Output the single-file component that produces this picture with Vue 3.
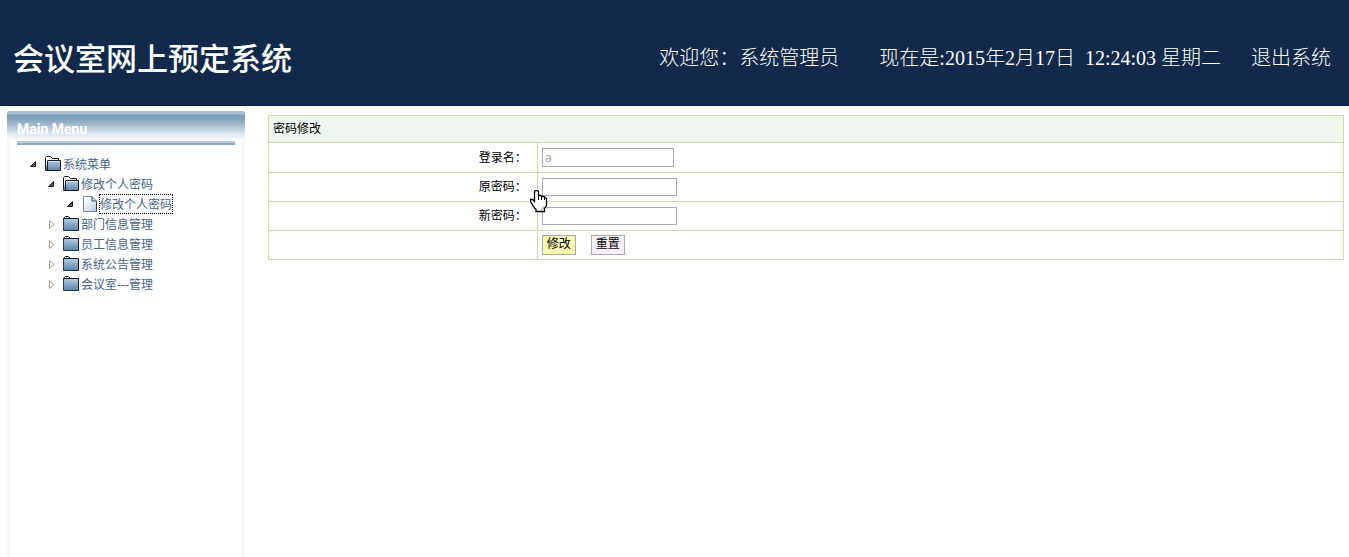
<template>
  <div class="page">
    <header class="top-bar">
      <h1>会议室网上预定系统</h1>
      <div class="top-info">
        <span class="welcome">欢迎您：系统管理员</span>
        <span class="clock">现在是:2015年2月17日&nbsp; 12:24:03 星期二</span>
        <a href="#" class="logout">退出系统</a>
      </div>
    </header>

    <div class="main">
      <nav class="sidebar">
        <div class="menu-head">
          <h2>Main Menu</h2>
        </div>
        <div class="menu-bar"></div>
        <ul class="tree">
          <li v-for="item in menu" :key="item.id" :class="'level-' + item.level">
            <svg v-if="item.open" class="arrow" width="8" height="8" viewBox="0 0 8 8">
              <path d="M6.5 1.5V6.5H1.5Z" fill="#555" stroke="#222" stroke-width="1" />
            </svg>
            <svg v-else class="arrow" width="8" height="10" viewBox="0 0 8 10">
              <path d="M2.5 1.5L7 5.5L2.5 9.5Z" fill="#fff" stroke="#a0a0a0" stroke-width="1" />
            </svg>
            <svg v-if="item.icon === 'page'" class="icon" width="16" height="16" viewBox="0 0 16 16">
              <defs>
                <linearGradient id="pageFill" x1="0" y1="0" x2="1" y2="1">
                  <stop offset="0.2" stop-color="#fff" />
                  <stop offset="1" stop-color="#b4c8e4" />
                </linearGradient>
              </defs>
              <path d="M1.5 0.5H10L14.5 5V15.5H1.5Z" fill="url(#pageFill)" stroke="#7484a0" />
              <path d="M10 0.5V5H14.5V15.5" fill="none" stroke="#384860" />
            </svg>
            <svg v-else-if="item.icon === 'open'" class="icon" width="16" height="16" viewBox="0 0 16 16">
              <path d="M0.5 14.5V1.5L1.5 0.5H5.5L7.5 2.5H13.5V4" fill="#fff" stroke="#111c28" />
              <path d="M2.5 4.5H15.5V14.5H0.5" fill="url(#folderFill)" stroke="#111c28" />
              <path d="M2.5 5V14" stroke="#111c28" />
              <path d="M3.5 5.5H14.5" stroke="#d8e8f8" />
            </svg>
            <svg v-else class="icon" width="16" height="16" viewBox="0 0 16 16">
              <path d="M1.5 3V1.5L2.5 0.5H5.5L7.5 2.5" fill="#fff" stroke="#111c28" />
              <path d="M0.5 2.5H15.5V14.5H0.5Z" fill="url(#folderFill)" stroke="#203850" />
              <path d="M0 2.5H15.5V14.5" fill="none" stroke="#111c28" />
            </svg>
            <a href="#" :class="{ selected: item.id === selectedId }" @click.prevent="selectedId = item.id">{{ item.text }}</a>
          </li>
        </ul>
      </nav>

      <form class="content" @submit.prevent>
        <table class="form-table">
          <colgroup>
            <col class="label-col">
            <col>
          </colgroup>
          <thead>
            <tr>
              <th colspan="2">密码修改</th>
            </tr>
          </thead>
          <tbody>
            <tr class="name-row">
              <td class="label"><label for="loginName">登录名：</label></td>
              <td><input id="loginName" class="name-input" type="text" v-model="loginName" disabled></td>
            </tr>
            <tr>
              <td class="label"><label for="oldPwd">原密码：</label></td>
              <td><input id="oldPwd" type="password" v-model="oldPwd"></td>
            </tr>
            <tr>
              <td class="label"><label for="newPwd">新密码：</label></td>
              <td><input id="newPwd" type="password" v-model="newPwd"></td>
            </tr>
            <tr>
              <td class="label"></td>
              <td>
                <div class="buttons">
                  <button type="submit" class="primary">修改</button>
                  <button type="button" @click="resetForm">重置</button>
                </div>
              </td>
            </tr>
          </tbody>
        </table>
      </form>
    </div>

    <svg class="hand" width="18" height="23" viewBox="0 0 18 23">
      <path d="M4.5 1.5L5.5 0.5H7.5L8.5 1.5V5.5H11L12 6.5H14L15 7.5L16.5 8.5V15.5L14.5 18.5V21.5H6V19.5L3.5 16.5L0.5 11.5V9.5H2.5L4.5 11.5Z" fill="#fff" stroke="#000" stroke-width="1.3" />
      <path d="M8.5 5V10M11.5 6.5V10M14.5 7.5V10" stroke="#000" />
      <path d="M14 16V21H9Z" fill="#c4c4c4" />
    </svg>

    <svg class="defs" width="0" height="0" aria-hidden="true">
      <defs>
        <linearGradient id="folderFill" x1="0" y1="0" x2="0" y2="1">
          <stop offset="0" stop-color="#b4cce4" />
          <stop offset="1" stop-color="#5c84a8" />
        </linearGradient>
      </defs>
    </svg>
  </div>
</template>

<script setup>
import { ref } from 'vue'

const menu = [
  { id: 1, level: 0, text: '系统菜单', icon: 'open', open: true },
  { id: 2, level: 1, text: '修改个人密码', icon: 'open', open: true },
  { id: 3, level: 2, text: '修改个人密码', icon: 'page', open: true },
  { id: 4, level: 1, text: '部门信息管理', icon: 'closed', open: false },
  { id: 5, level: 1, text: '员工信息管理', icon: 'closed', open: false },
  { id: 6, level: 1, text: '系统公告管理', icon: 'closed', open: false },
  { id: 7, level: 1, text: '会议室---管理', icon: 'closed', open: false },
]

const selectedId = ref(3)
const loginName = ref('a')
const oldPwd = ref('')
const newPwd = ref('')

const resetForm = () => {
  oldPwd.value = ''
  newPwd.value = ''
}
</script>

<style>
body {
  margin: 0;
  background: #fff;
}
</style>

<style scoped>
.page {
  position: relative;
  display: flex;
  flex-direction: column;
  min-height: 100vh;
  font-family: "Liberation Sans", "Noto Sans CJK SC", sans-serif;
  font-size: 12px;
}

.top-bar {
  display: flex;
  justify-content: space-between;
  align-items: center;
  box-sizing: border-box;
  height: 106px;
  padding: 10px 18px 0 13px;
  border-bottom: 1px solid #0c1f3e;
  background: #11294b;
  color: #fff;
  font-family: "Liberation Serif", "Noto Sans CJK SC", serif;
}

h1 {
  margin: 0;
  padding-top: 4px;
  font-size: 31px;
  line-height: 40px;
  font-weight: 500;
}

.top-info {
  display: flex;
  font-size: 20px;
  line-height: 30px;
  font-weight: 300;
  white-space: nowrap;
}

.clock {
  margin: 0 30px 0 40px;
}

.logout {
  color: #fff;
  text-decoration: none;
}

.main {
  display: flex;
  flex: 1;
  padding: 5px 5px 0 7px;
}

.sidebar {
  flex: none;
  width: 238px;
  background: linear-gradient(to right, #f5f8ff 4px, #fff 4px, #fff 234px, #f5f8ff 234px);
}

.menu-head {
  height: 30px;
  border-radius: 2px 2px 0 0;
  background: linear-gradient(#a9c0d4 0, #a9c0d4 3px, #7599b5 4px, #9db5ca 13px, #dbe3ed 22px, #fff 30px);
}

h2 {
  margin: 0;
  padding: 10px 10px 0;
  color: #fff;
  font-family: Roboto, sans-serif;
  font-size: 14px;
  line-height: 16px;
  font-weight: 700;
}

.menu-bar {
  height: 4px;
  margin: 0 10px;
  background: linear-gradient(#bccada 2px, #8ba9c0 2px);
}

.tree {
  margin: 0;
  padding: 9px 0 0 22px;
  list-style: none;
}

.tree li {
  display: flex;
  align-items: center;
  height: 20px;
}

.tree .level-1 {
  padding-left: 18px;
}

.tree .level-2 {
  padding-left: 37px;
}

.arrow {
  flex: none;
  width: 8px;
  margin-right: 8px;
}

.icon {
  flex: none;
  margin-right: 2px;
}

.tree a {
  padding-top: 2px;
  color: #48648a;
  line-height: 16px;
  text-decoration: none;
  white-space: nowrap;
}

.tree a.selected {
  outline: 1px dotted #000;
}

.content {
  flex: 1;
  margin: 4px 0 0 23px;
}

.form-table {
  width: 100%;
  border-collapse: collapse;
  table-layout: fixed;
}

.label-col {
  width: 25%;
}

.form-table th,
.form-table td {
  box-sizing: border-box;
  height: 29px;
  padding: 0 4px;
  border: 1px solid #cddaa9;
  text-align: left;
}

.form-table th {
  height: 27px;
  padding-bottom: 3px;
  background: #eef6ee;
  font-weight: 400;
}

.form-table .name-row td {
  height: 30px;
}

.form-table .label {
  padding-right: 10px;
  padding-bottom: 3px;
  text-align: right;
}

input {
  display: block;
  box-sizing: border-box;
  width: 135px;
  height: 18px;
  padding: 0 2px;
  border: 1px solid #a9a9a9;
  background: #fff;
  font-family: "DejaVu Sans", sans-serif;
  font-size: 12px;
}

.name-input {
  width: 132px;
  height: 19px;
  color: #a8b09c;
}

.buttons {
  display: flex;
  gap: 15px;
}

button {
  box-sizing: border-box;
  width: 34px;
  height: 20px;
  padding: 0 0 2px;
  border: 1px solid #a9a9a9;
  background: #f6f1f6;
  color: #000;
  font-family: inherit;
  font-size: 12px;
  line-height: 16px;
}

.primary {
  background: #f8f8b0;
}

.hand {
  position: absolute;
  left: 530px;
  top: 190px;
}

.defs {
  position: absolute;
}
</style>
